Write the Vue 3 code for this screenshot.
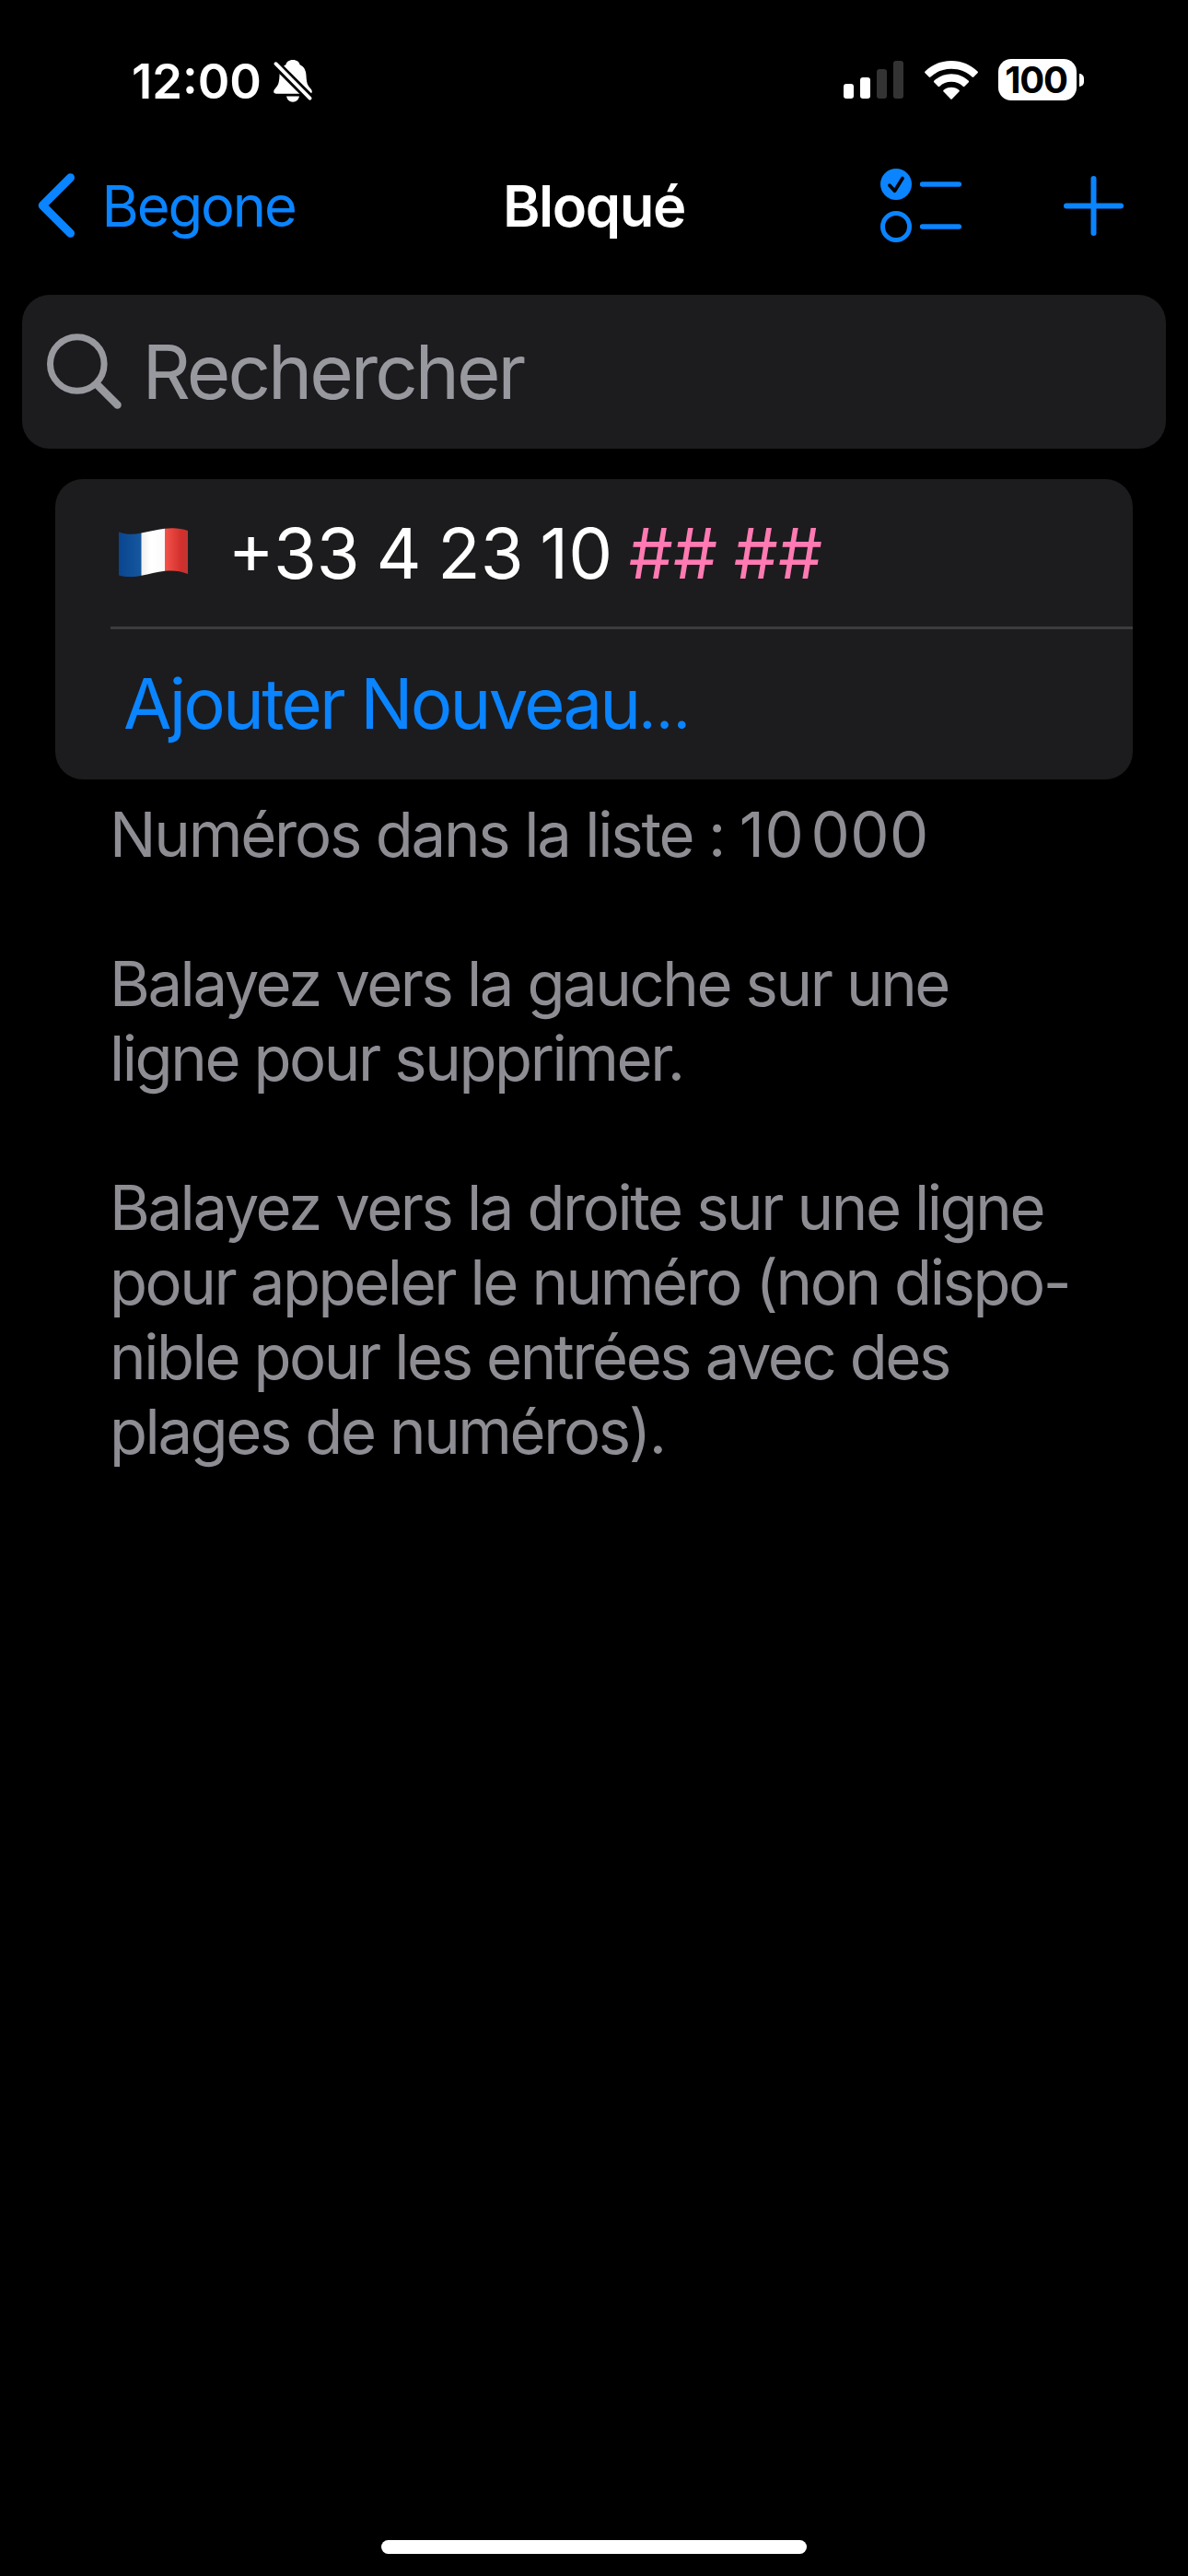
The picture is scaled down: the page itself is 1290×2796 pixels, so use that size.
<template>
  <div class="screen">
    <header class="status-bar">
      <div class="status-left">
        <span class="clock">12:00</span>
        <svg class="bell" viewBox="0 0 42 46">
          <path
            fill="#fff"
            d="M21 0c-4.400 0-7 2.400-7.600 5.300C8.400 7.500 6.800 12 6.500 17c-.4 8.500-1.500 10.500-4.600 14C-.8 34-.3 36.700 3.200 36.700h35.600c3.500 0 4-2.700 1.300-5.700-3.100-3.500-4.200-5.500-4.600-14-.3-5-1.900-9.500-6.900-11.700C28 2.400 25.400 0 21 0zM14 39.500h14c-.8 3.800-3.500 6.200-7 6.200s-6.200-2.400-7-6.200z"
          />
          <path d="M2 4l38 38" stroke="#000" stroke-width="9.500" />
          <path d="M2.500 4.200l37 37.500" stroke="#fff" stroke-width="3.800" stroke-linecap="round" />
        </svg>
      </div>
      <div class="status-right">
        <svg class="signal" viewBox="0 0 65 41">
          <rect x="0" y="25" width="11" height="16" rx="3" fill="#fff" />
          <rect x="18" y="18" width="11" height="23" rx="3" fill="#fff" />
          <rect x="36" y="9" width="11" height="32" rx="3" fill="#333" />
          <rect x="54" y="0" width="11" height="41" rx="3" fill="#333" />
        </svg>
        <svg class="wifi" viewBox="0 0 58 42" fill="#fff">
          <path d="M29 0C17.800 0 7.800 4.300.5 11.600a1.200 1.200 0 0 0 0 1.700l4.200 4.300a1.200 1.200 0 0 0 1.700 0C12.300 11.900 20.200 8.800 29 8.800s16.700 3.100 22.600 8.800a1.200 1.200 0 0 0 1.700 0l4.200-4.300a1.200 1.200 0 0 0 0-1.700C50.200 4.300 40.200 0 29 0z" />
          <path d="M29 14.300c-7.200 0-13.700 2.800-18.600 7.300a1.200 1.200 0 0 0 0 1.800l4.200 4.300a1.200 1.200 0 0 0 1.700 0C19.700 24.700 24 22.800 29 22.800s9.300 1.900 12.700 4.900a1.200 1.200 0 0 0 1.700 0l4.200-4.300a1.200 1.200 0 0 0 0-1.800C42.700 17.100 36.200 14.300 29 14.300z" />
          <path d="M29 28.700c-3.300 0-6.200 1.200-8.400 3.100a1.200 1.200 0 0 0 0 1.700l7.500 7.700a1.200 1.200 0 0 0 1.800 0l7.500-7.700a1.200 1.200 0 0 0 0-1.700c-2.200-1.900-5.100-3.100-8.400-3.100z" />
        </svg>
        <div class="battery">
          <span class="battery-body">100</span>
          <span class="battery-cap"></span>
        </div>
      </div>
    </header>

    <nav class="nav-bar">
      <div class="nav-back">
        <svg class="chevron" viewBox="0 0 40 70">
          <path d="M35.500 4.700L5.200 35l30.300 30.300" fill="none" stroke="#0a84ff" stroke-width="9" stroke-linecap="round" stroke-linejoin="round" />
        </svg>
        <span class="back-label">Begone</span>
      </div>
      <h1 class="title">Bloqué</h1>
      <div class="nav-actions">
        <svg class="checklist" viewBox="0 0 88 80">
          <circle cx="17" cy="17" r="17" fill="#0a84ff" />
          <path d="M10 18.200l5.500 6L24 10.500" fill="none" stroke="#000" stroke-width="3.800" stroke-linecap="round" stroke-linejoin="round" />
          <circle cx="17" cy="63" r="14.500" fill="none" stroke="#0a84ff" stroke-width="5" />
          <path d="M45.500 17h40M45.500 63h40" stroke="#0a84ff" stroke-width="5.300" stroke-linecap="round" />
        </svg>
        <svg class="plus" viewBox="0 0 65 65">
          <path d="M32.500 3v59M3 32.500h59" stroke="#0a84ff" stroke-width="6" stroke-linecap="round" />
        </svg>
      </div>
    </nav>

    <div class="search">
      <svg class="magnifier" viewBox="0 0 81 82">
        <circle cx="32.800" cy="33" r="29.300" fill="none" stroke="#98989f" stroke-width="7" />
        <path d="M54.500 55.500L76.500 77.500" stroke="#98989f" stroke-width="8.500" stroke-linecap="round" />
      </svg>
      <span class="search-label">Rechercher</span>
    </div>

    <main class="list">
      <div class="row row-number">
        <svg class="flag" viewBox="0 0 75 54">
          <defs>
            <linearGradient id="flag-blue">
              <stop offset="0" stop-color="#0a4590" />
              <stop offset="1" stop-color="#1558a0" />
            </linearGradient>
            <linearGradient id="flag-white">
              <stop offset="0" stop-color="#f0f0f0" />
              <stop offset=".4" stop-color="#fff" />
              <stop offset="1" stop-color="#fafafa" />
            </linearGradient>
            <linearGradient id="flag-red">
              <stop offset="0" stop-color="#f4524a" />
              <stop offset=".7" stop-color="#d2302c" />
              <stop offset="1" stop-color="#c03532" />
            </linearGradient>
          </defs>
          <path d="M0 4.500C8 7.500 16 7.300 25 5.500V51.500C16 53.700 8 53.500 0 51.500z" fill="url(#flag-blue)" />
          <path d="M24.500 5.600C33 4 41 1.700 50 .8V46.800C41 47.700 33 50.500 24.500 51.700z" fill="url(#flag-white)" />
          <path d="M50 .8C58-.3 67 0 75 3V50C67 46.500 58 46 50 46.800z" fill="url(#flag-red)" />
        </svg>
        <div class="number">
          <span
            v-for="(group, i) in groups"
            :key="i"
            :class="{ wildcard: group.startsWith('#') }"
          >{{ group }}</span>
        </div>
      </div>
      <div class="row row-add">
        <span>Ajouter Nouveau<span class="ellipsis">…</span></span>
      </div>
    </main>

    <footer class="notes">
      <p class="total">Numéros dans la liste : <span class="count">10<span class="thin">&#8239;</span>000</span></p>
      <p v-for="(note, i) in notes" :key="i">
        <span v-for="line in note" :key="line" class="line">{{ line }}</span>
      </p>
    </footer>

    <div class="home-indicator"></div>
  </div>
</template>

<script setup>
const groups = ['+33', '4', '23', '10', '##', '##'];

const notes = [
  ['Balayez vers la gauche sur une', 'ligne pour supprimer.'],
  [
    'Balayez vers la droite sur une ligne',
    'pour appeler le numéro (non dispo-',
    'nible pour les entrées avec des',
    'plages de numéros).'
  ]
];
</script>

<style>
body {
  background: #000;
}
</style>

<style scoped>
.screen {
  display: flex;
  flex-direction: column;
  box-sizing: border-box;
  width: 1290px;
  height: 2796px;
  overflow: hidden;
  background: #000;
  color: #fff;
  font-family: Inter, "Liberation Sans", sans-serif;
  white-space: nowrap;
}

svg {
  display: block;
  flex: none;
}

.status-bar {
  display: flex;
  align-items: flex-start;
  justify-content: space-between;
  height: 168px;
  box-sizing: border-box;
  padding: 57px 113px 0 143px;
}

.status-left,
.status-right {
  display: flex;
  align-items: center;
}

.status-left {
  gap: 13px;
  height: 62px;
}

.status-right {
  height: 59px;
}

.clock {
  font-size: 52.5px;
  font-weight: 600;
  line-height: 60px;
}

.bell {
  width: 42px;
  height: 46px;
}

.signal {
  width: 65px;
  height: 41px;
}

.wifi {
  width: 58px;
  height: 42px;
  margin-left: 23px;
}

.battery {
  display: flex;
  align-items: center;
  gap: 3px;
  margin-left: 22px;
}

.battery-body {
  width: 85px;
  height: 45px;
  border-radius: 14px;
  background: #fff;
  color: #000;
  font-size: 40px;
  font-weight: 700;
  line-height: 46px;
  letter-spacing: -1.2px;
  text-indent: -3px;
  text-align: center;
}

.battery-cap {
  width: 5px;
  height: 14px;
  border-radius: 0 5px 5px 0;
  background: #fff;
}

.nav-bar {
  display: grid;
  grid-template-columns: 1fr auto 1fr;
  align-items: center;
  height: 110px;
  padding: 0 41px;
  margin-bottom: 42px;
}

.nav-back {
  display: flex;
  align-items: center;
  gap: 29.5px;
  color: #0a84ff;
  font-size: 61.5px;
  letter-spacing: -2.1px;
}

.chevron {
  width: 40px;
  height: 70px;
}

.title {
  margin: 0;
  font-size: 61.5px;
  font-weight: 600;
  letter-spacing: -1.4px;
}

.nav-actions {
  display: flex;
  align-items: center;
  justify-content: flex-end;
  gap: 111px;
  padding-right: 29px;
}

.checklist {
  width: 88px;
  height: 80px;
}

.plus {
  width: 65px;
  height: 65px;
}

.search {
  display: flex;
  align-items: center;
  gap: 22.5px;
  height: 167px;
  box-sizing: border-box;
  margin: 0 24px 33px;
  padding-left: 27px;
  border-radius: 30px;
  background: #1c1c1e;
  color: #98989f;
  font-size: 81.6px;
  letter-spacing: -3px;
}

.magnifier {
  width: 81px;
  height: 82px;
  margin-bottom: 2px;
}

.list {
  margin: 0 60px;
  border-radius: 30px;
  background: #1c1c1e;
  font-size: 76px;
}

.row {
  display: flex;
  align-items: center;
}

.row-number {
  height: 160px;
  margin-left: 60px;
  padding-left: 9px;
  border-bottom: 3px solid #3c3c3e;
}

.flag {
  width: 75px;
  height: 54px;
}

.number {
  display: flex;
  gap: 17.7px;
  margin: 0 0 1px 43.5px;
}

.wildcard {
  color: #ff7ab2;
}

.row-add {
  box-sizing: border-box;
  height: 163px;
  padding: 0 0 4px 74px;
  color: #0a84ff;
  letter-spacing: -2.8px;
}

.ellipsis {
  font-size: 65px;
  line-height: 1;
}

.notes {
  padding: 19px 120px 0 119px;
  color: #8d8d93;
  font-size: 67px;
  line-height: 81px;
  letter-spacing: -2.42px;
}

.notes p {
  margin: 0 0 81px;
}

.notes .total {
  letter-spacing: -2.2px;
}

.count {
  letter-spacing: 0.5px;
}

.thin {
  letter-spacing: -5px;
}

.line {
  display: block;
}

.home-indicator {
  flex: none;
  width: 462px;
  height: 15px;
  margin: auto auto 24px;
  border-radius: 8px;
  background: #fff;
}
</style>
